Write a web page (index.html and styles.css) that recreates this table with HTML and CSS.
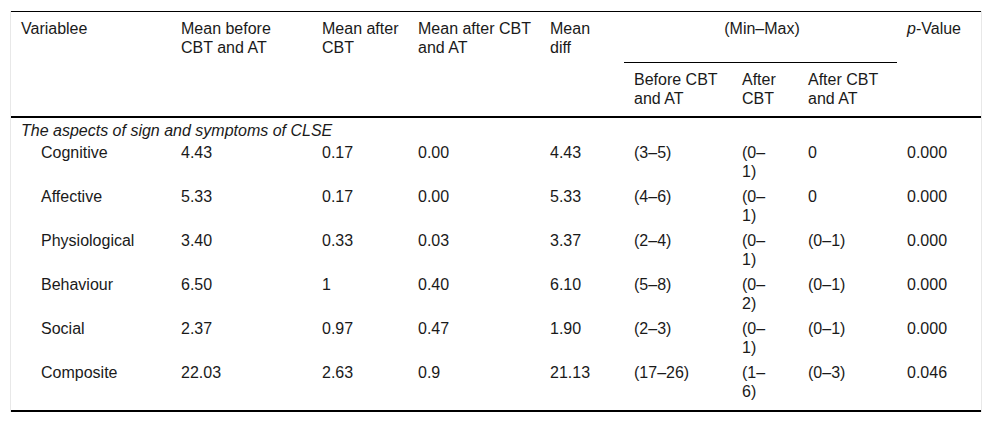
FILE: index.html
```html
<!DOCTYPE html>
<html lang="en">
<head>
<meta charset="utf-8">
<title>Table</title>
<link rel="stylesheet" href="styles.css">
</head>
<body>
<div class="wrap">
  <table class="data">
    <colgroup>
      <col class="c1"><col class="c2"><col class="c3"><col class="c4"><col class="c5">
      <col class="c6"><col class="c7"><col class="c8"><col class="c9">
    </colgroup>
    <thead>
      <tr class="hr1">
        <th rowspan="2" class="span">Variablee</th>
        <th rowspan="2" class="span">Mean before CBT and AT</th>
        <th rowspan="2" class="span">Mean after CBT</th>
        <th rowspan="2" class="span">Mean after CBT and AT</th>
        <th rowspan="2" class="span pr-wide">Mean diff</th>
        <th colspan="3" class="group">(Min–Max)</th>
        <th rowspan="2" class="span"><i>p</i>-Value</th>
      </tr>
      <tr class="hr2">
        <th class="sub">Before CBT and AT</th>
        <th class="sub narrow">After CBT</th>
        <th class="sub">After CBT and AT</th>
      </tr>
    </thead>
    <tbody>
      <tr class="section"><td colspan="9"><i>The aspects of sign and symptoms of CLSE</i></td></tr>
      <tr><td class="name">Cognitive</td><td>4.43</td><td>0.17</td><td>0.00</td><td>4.43</td><td>(3–5)</td><td class="narrow">(0–1)</td><td>0</td><td>0.000</td></tr>
      <tr><td class="name">Affective</td><td>5.33</td><td>0.17</td><td>0.00</td><td>5.33</td><td>(4–6)</td><td class="narrow">(0–1)</td><td>0</td><td>0.000</td></tr>
      <tr><td class="name">Physiological</td><td>3.40</td><td>0.33</td><td>0.03</td><td>3.37</td><td>(2–4)</td><td class="narrow">(0–1)</td><td>(0–1)</td><td>0.000</td></tr>
      <tr><td class="name">Behaviour</td><td>6.50</td><td>1</td><td>0.40</td><td>6.10</td><td>(5–8)</td><td class="narrow">(0–2)</td><td>(0–1)</td><td>0.000</td></tr>
      <tr><td class="name">Social</td><td>2.37</td><td>0.97</td><td>0.47</td><td>1.90</td><td>(2–3)</td><td class="narrow">(0–1)</td><td>(0–1)</td><td>0.000</td></tr>
      <tr class="last"><td class="name">Composite</td><td>22.03</td><td>2.63</td><td>0.9</td><td>21.13</td><td>(17–26)</td><td class="narrow">(1–6)</td><td>(0–3)</td><td>0.046</td></tr>
    </tbody>
  </table>
</div>
</body>
</html>
```
FILE: styles.css
```css
html, body {
  margin: 0;
  padding: 0;
  background: #fff;
}

body {
  font-family: "Liberation Sans", Arial, sans-serif;
  font-size: 16px;
  line-height: 19px;
  color: #1a1a1a;
}

.wrap {
  margin: 11px 0 0 10px;
  width: 970px;
  border-left: 1px solid #e8e8e8;
  border-right: 1px solid #e8e8e8;
}

.data {
  width: 970px;
  table-layout: fixed;
  border-collapse: separate;
  border-spacing: 0;
  border-top: 1px solid #000;
  border-bottom: 2px solid #000;
}

.c1 { width: 160px; }
.c2 { width: 141px; }
.c3 { width: 96px; }
.c4 { width: 132px; }
.c5 { width: 84px; }
.c6 { width: 108px; }
.c7 { width: 66px; }
.c8 { width: 99px; }
.c9 { width: 84px; }

th, td {
  padding: 3px 5px 3px 10px;
  text-align: left;
  vertical-align: top;
  font-weight: normal;
}

th {
  padding-top: 7px;
}

.span {
  border-bottom: 2px solid #000;
}

.pr-wide {
  padding-right: 12px;
}

.group {
  text-align: center;
  padding-bottom: 24px;
  padding-left: 8px;
  border-bottom: 1px solid #000;
}

.sub {
  padding-top: 7px;
  padding-bottom: 8px;
  border-bottom: 2px solid #000;
}

.narrow {
  padding-right: 22px;
}

.section td {
  padding-left: 10px;
  padding-bottom: 0;
}

td.name {
  padding-left: 30px;
}

.last td {
  padding-bottom: 9px;
}
```
